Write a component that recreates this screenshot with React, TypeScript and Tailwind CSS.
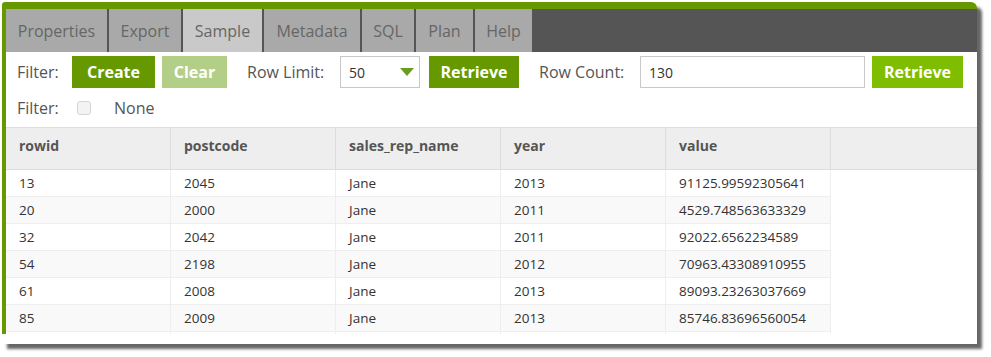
const tabs = [
  { label: 'Properties', w: 'w-[101px]' },
  { label: 'Export', w: 'w-[72px]' },
  { label: 'Sample', w: 'w-[79px]', active: true },
  { label: 'Metadata', w: 'w-[96px]' },
  { label: 'SQL', w: 'w-[52px]' },
  { label: 'Plan', w: 'w-[57px]' },
  { label: 'Help', w: 'w-[57px]' },
]

const columns = ['rowid', 'postcode', 'sales_rep_name', 'year', 'value']

const rows = [
  ['13', '2045', 'Jane', '2013', '91125.99592305641'],
  ['20', '2000', 'Jane', '2011', '4529.748563633329'],
  ['32', '2042', 'Jane', '2011', '92022.6562234589'],
  ['54', '2198', 'Jane', '2012', '70963.43308910955'],
  ['61', '2008', 'Jane', '2013', '89093.23263037669'],
  ['85', '2009', 'Jane', '2013', '85746.83696560054'],
  ['', '', '', '', ''],
]

export default function App() {
  return (
    <div
      className="h-[357px] w-[991px] overflow-hidden bg-white pl-[2px] pt-[2px]"
      style={{ fontFamily: '"Open Sans", "Liberation Sans", sans-serif' }}
    >
      <div className="flex h-[342px] w-[975px] flex-col rounded-tr-[6px] bg-white shadow-[5px_5px_3px_rgba(0,0,0,0.6)]">
        {/* green frame */}
        <div className="h-[332px] rounded-tl-[3px] rounded-tr-[6px] bg-[#669900] pl-[4px] pt-[7px]">
          <div className="flex h-full flex-col overflow-hidden bg-white">
            {/* tabs */}
            <div className="flex h-[43px] shrink-0 gap-[2px] bg-[#555555]">
              {tabs.map((t) => (
                <div
                  key={t.label}
                  className={`${t.w} flex items-center justify-center text-[16px] text-[#666] ${
                    t.active ? 'bg-[#c9c9c9]' : 'bg-[#a9a9a9]'
                  }`}
                >
                  {t.label}
                </div>
              ))}
            </div>

            {/* toolbar */}
            <div className="mt-[4px] flex h-[32px] items-center text-[16px] text-[#555]">
              <span className="ml-[11px] w-[55px]">Filter:</span>
              <button className="h-[32px] w-[83px] bg-[#669900] text-[16px] font-bold text-white">Create</button>
              <button className="ml-[7px] h-[32px] w-[65px] bg-[#b3cf87] text-[16px] font-bold text-white">Clear</button>
              <span className="ml-[20px] w-[93px]">Row Limit:</span>
              <div className="flex h-[32px] w-[80px] items-center justify-between border border-[#c8c8c8] pl-[8px] pr-[5px] text-[14px] text-[#333]">
                <span>50</span>
                <svg width="14" height="8" viewBox="0 0 14 8">
                  <polygon points="0,0 14,0 7,8" fill="#6a9c1f" />
                </svg>
              </div>
              <button className="ml-[9px] h-[32px] w-[90px] bg-[#669900] text-[16px] font-bold text-white">Retrieve</button>
              <span className="ml-[20px] w-[101px]">Row Count:</span>
              <div className="flex h-[32px] w-[225px] items-center border border-[#c8c8c8] pl-[8px] text-[14px] text-[#333]">
                130
              </div>
              <button className="ml-[7px] h-[32px] w-[91px] bg-[#7fbd00] text-[16px] font-bold text-white">Retrieve</button>
            </div>

            <div className="mt-[9px] flex h-[22px] items-center text-[16px] text-[#555]">
              <span className="ml-[11px] w-[60px]">Filter:</span>
              <span className="h-[14px] w-[14px] rounded-[3px] border border-[#d6d6d6] bg-[#f3f3f3]" />
              <span className="ml-[23px]">None</span>
            </div>

            {/* table */}
            <div className="mt-[8px] flex h-[43px] shrink-0 border-y border-[#dddddd] bg-[#eeeeee]">
              {columns.map((c) => (
                <div
                  key={c}
                  className="w-[165px] border-r border-[#dddddd] pl-[13px] pt-[8px] text-[14px] leading-[20px] font-bold text-[#555]"
                >
                  {c}
                </div>
              ))}
            </div>
            {rows.map((r, ri) => (
              <div
                key={ri}
                className={`flex h-[27px] w-[825px] shrink-0 border-b border-[#eeeeee] ${
                  ri % 2 === 1 ? 'bg-[#f9f9f9]' : 'bg-white'
                }`}
              >
                {r.map((v, ci) => (
                  <div
                    key={ci}
                    className="flex w-[165px] items-center border-r border-[#eeeeee] pl-[13px] text-[13.5px] text-[#333]"
                  >
                    {v}
                  </div>
                ))}
              </div>
            ))}
          </div>
        </div>
      </div>
    </div>
  )
}
